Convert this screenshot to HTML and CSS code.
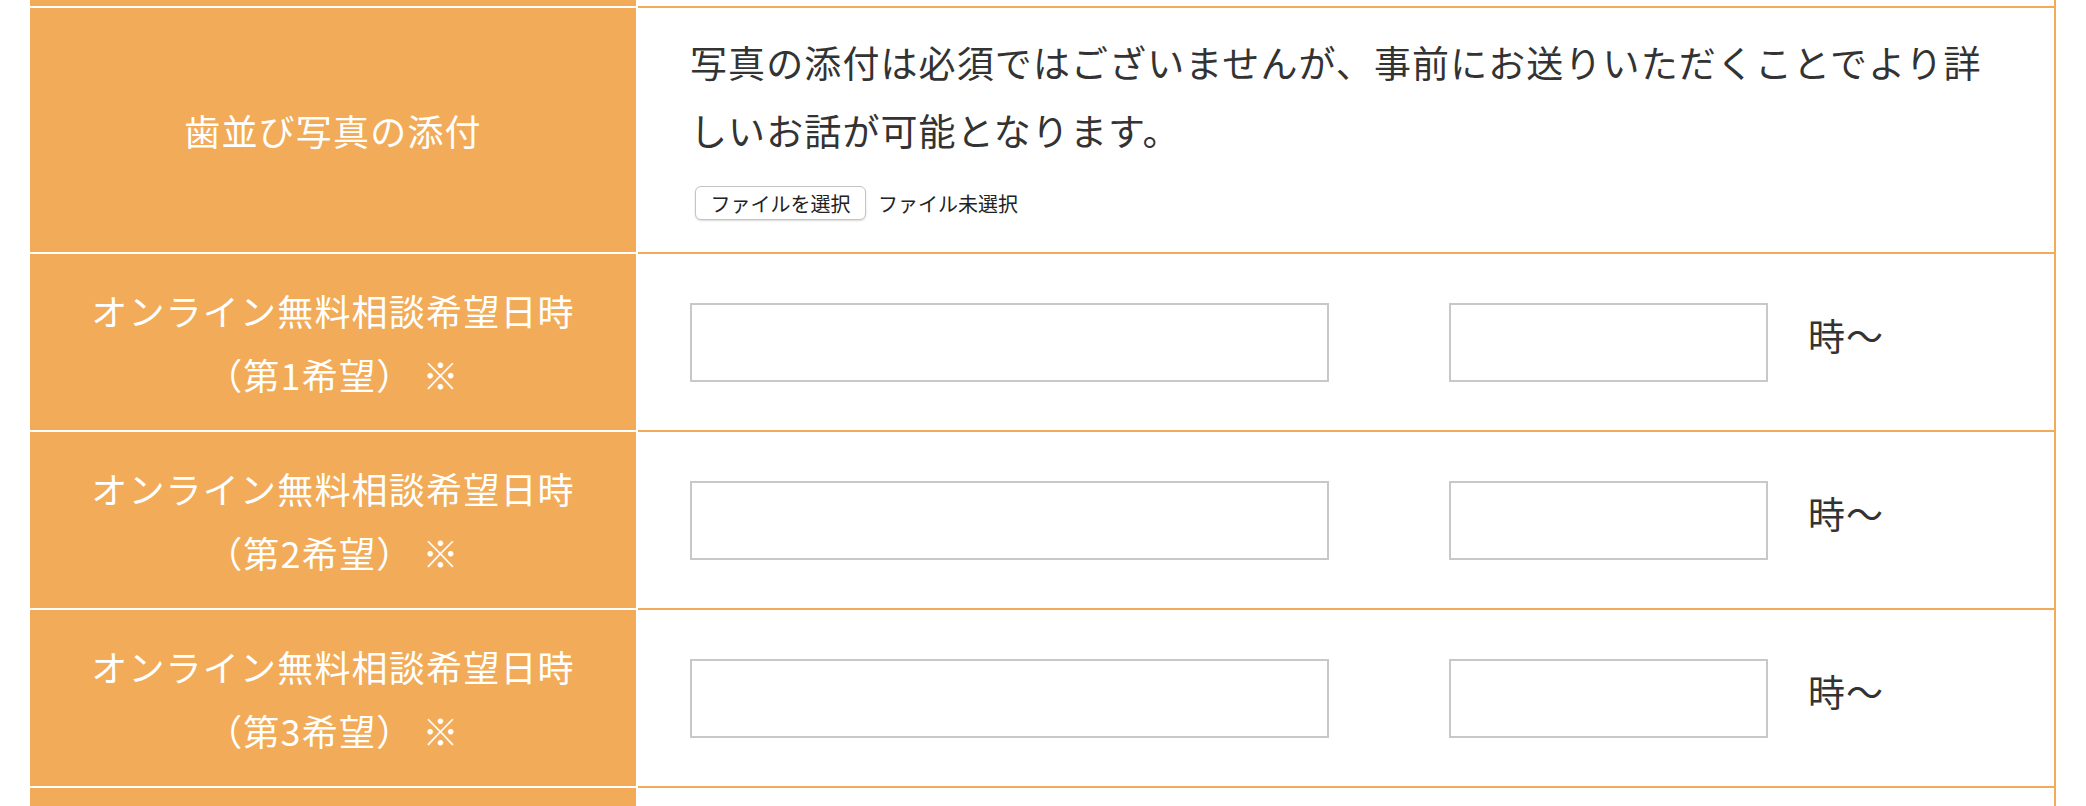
FILE: index.html
```html
<!DOCTYPE html>
<html lang="ja">
<head>
<meta charset="utf-8">
<title>フォーム</title>
<link rel="stylesheet" href="styles.css">
</head>
<body>
<div class="form-table">
  <div class="row row-cut-top">
    <div class="th"></div>
    <div class="td"></div>
  </div>
  <div class="row row-photo">
    <div class="th">歯並び写真の添付</div>
    <div class="td td-photo">
      <p class="note">写真の添付は必須ではございませんが、事前にお送りいただくことでより詳しいお話が可能となります。</p>
      <div class="file">
        <button type="button" class="file-btn">ファイルを選択</button>
        <span class="file-name">ファイル未選択</span>
      </div>
    </div>
  </div>
  <div class="row row-date">
    <div class="th">オンライン無料相談希望日時<br>（第1希望） ※</div>
    <div class="td td-date">
      <input type="text" class="in-date">
      <input type="text" class="in-time">
      <span class="unit">時〜</span>
    </div>
  </div>
  <div class="row row-date">
    <div class="th">オンライン無料相談希望日時<br>（第2希望） ※</div>
    <div class="td td-date">
      <input type="text" class="in-date">
      <input type="text" class="in-time">
      <span class="unit">時〜</span>
    </div>
  </div>
  <div class="row row-date">
    <div class="th">オンライン無料相談希望日時<br>（第3希望） ※</div>
    <div class="td td-date">
      <input type="text" class="in-date">
      <input type="text" class="in-time">
      <span class="unit">時〜</span>
    </div>
  </div>
  <div class="row row-cut-bottom">
    <div class="th"></div>
    <div class="td"></div>
  </div>
</div>
</body>
</html>
```

FILE: styles.css
```css
* { box-sizing: border-box; }
html, body { margin: 0; padding: 0; background: #fff; }
body {
  font-family: "Noto Sans CJK JP", "Noto Sans", sans-serif;
  color: #333;
  overflow: hidden;
}
.form-table {
  margin-left: 30px;
  width: 2026px;
  display: flex;
  flex-direction: column;
}
.row {
  display: grid;
  grid-template-columns: 606px 1418px;
  column-gap: 2px;
}
.th {
  background: #f2ab58;
  color: #fff;
  border-top: 2px solid #fff;
  display: flex;
  align-items: center;
  justify-content: center;
  text-align: center;
  font-size: 36px;
  letter-spacing: 1.2px;
  line-height: 64px;
}
.td {
  border-top: 2px solid #f2ab58;
  border-right: 2px solid #f2ab58;
  padding: 0 50px 0 52px;
}
.row-cut-top { height: 6px; }
.row-cut-top .th, .row-cut-top .td { border-top: 0; }
.row-photo { height: 246px; }
.row-date { height: 178px; }
.row-cut-bottom { height: 30px; }

.td-photo { padding-top: 20px; }
.note {
  margin: 0;
  font-size: 37px;
  letter-spacing: 1.1px;
  line-height: 68px;
}
.file {
  margin-top: 22px;
  display: flex;
  align-items: center;
}
.file-btn {
  margin-left: 5px;
  width: 171px;
  height: 34px;
  padding: 0;
  font-family: inherit;
  font-size: 20px;
  color: #222;
  background: #fff;
  border: 1px solid #c4c4c4;
  border-radius: 6px;
  box-shadow: 0 1px 2px rgba(0,0,0,0.15);
}
.file-name {
  margin-left: 12px;
  font-size: 20px;
  color: #222;
}

.td-date {
  display: flex;
  align-items: center;
}
.in-date, .in-time {
  height: 79px;
  border: 2px solid #c8c8c8;
  background: #fff;
  margin: 0;
  padding: 0 10px;
  outline: none;
}
.in-date { width: 639px; }
.in-time { width: 319px; margin-left: 120px; }
.unit {
  margin-left: 40px;
  font-size: 37px;
  letter-spacing: 1px;
  margin-top: -14px;
}
```
